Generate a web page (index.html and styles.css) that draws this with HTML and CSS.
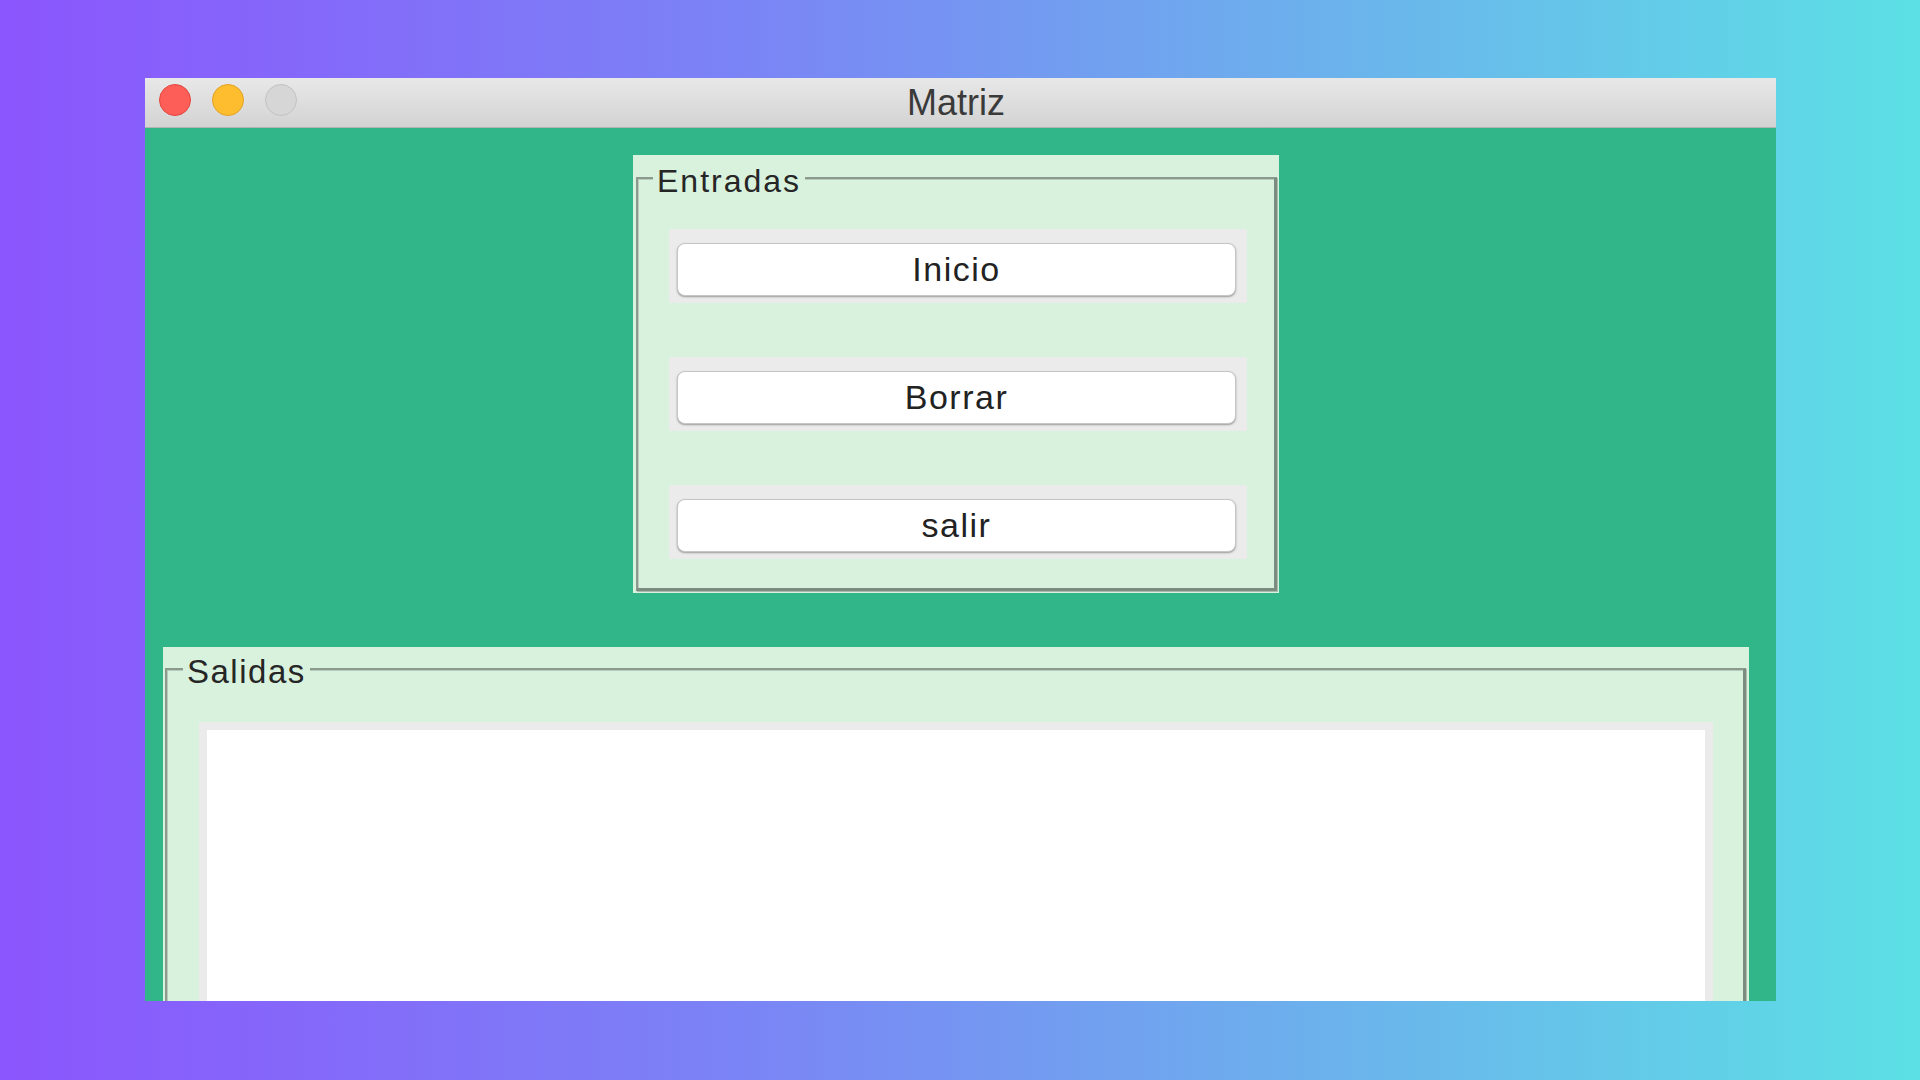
FILE: index.html
```html
<!DOCTYPE html>
<html lang="es">
<head>
<meta charset="utf-8">
<title>Matriz</title>
<link rel="stylesheet" href="styles.css">
</head>
<body>
<div class="window">
  <div class="titlebar">
    <div class="lights">
      <span class="light red"></span>
      <span class="light yellow"></span>
      <span class="light gray"></span>
    </div>
    <div class="title">Matriz</div>
    <div></div>
  </div>
  <div class="content">
    <div class="panel entradas">
      <div class="frame">
        <span class="legend">Entradas</span>
        <div class="btn-wrap"><button class="btn">Inicio</button></div>
        <div class="btn-wrap"><button class="btn">Borrar</button></div>
        <div class="btn-wrap"><button class="btn">salir</button></div>
      </div>
    </div>
    <div class="panel salidas">
      <div class="frame">
        <span class="legend">Salidas</span>
        <div class="textarea"></div>
      </div>
    </div>
  </div>
</div>
</body>
</html>
```

FILE: styles.css
```css
html, body {
  margin: 0;
  padding: 0;
}
body {
  width: 1920px;
  height: 1080px;
  overflow: hidden;
  background: linear-gradient(90deg, #8b55fd 0%, #7a86f5 40%, #6bb3ec 70%, #5ce0e5 100%);
  font-family: "Liberation Sans", Arial, sans-serif;
  padding-top: 78px;
  box-sizing: border-box;
}
.window {
  margin-left: 145px;
  width: 1631px;
  height: 923px;
  display: flex;
  flex-direction: column;
  overflow: hidden;
}
.titlebar {
  height: 49px;
  border-bottom: 1px solid #b3b3b3;
  background: linear-gradient(#e8e8e8, #d3d3d3);
  display: grid;
  grid-template-columns: 1fr auto 1fr;
  flex: none;
}
.lights {
  display: flex;
  gap: 21px;
  padding: 6px 0 0 14px;
}
.light {
  width: 32px;
  height: 32px;
  border-radius: 50%;
  box-sizing: border-box;
}
.red { background: #fd5e57; border: 1px solid #e2463f; }
.yellow { background: #febc2f; border: 1px solid #e0a326; }
.gray { background: #d6d6d6; border: 1px solid #c2c2c2; }
.title {
  font-size: 36px;
  line-height: 49px;
  color: #3a3a3a;
  margin-left: -9px;
}
.content {
  flex: 1;
  background: #31b689;
  padding-top: 27px;
  overflow: hidden;
}
.panel {
  background: #d9f2dd;
  box-sizing: border-box;
}
.entradas {
  margin-left: 488px;
  width: 646px;
  padding: 22px 2px 2px 3px;
}
.frame {
  position: relative;
  border-style: solid;
  border-color: #8a9b8d #7c8c80 #7c8c80 #8a9b8d;
  border-width: 2px 3px 3px 2px;
  box-shadow: 1px 1px 0 #aabdad, inset 1px 1px 0 #b9cbbd;
}
.entradas .frame {
  padding: 50px 27px 29px 31px;
  display: flex;
  flex-direction: column;
  gap: 54px;
}
.legend {
  position: absolute;
  background: #d9f2dd;
  color: #262626;
  padding: 0 4px;
}
.entradas .legend {
  top: -16px;
  left: 15px;
  font-size: 32px;
  line-height: 37px;
  letter-spacing: 2px;
}
.btn-wrap {
  background: #ebebeb;
  padding: 14px 11px 7px 8px;
}
.btn {
  display: block;
  width: 100%;
  height: 53px;
  background: #ffffff;
  border: 1px solid #c6c6c6;
  border-radius: 8px;
  box-shadow: 0 1px 2px rgba(0, 0, 0, 0.35);
  font-family: "Liberation Sans", Arial, sans-serif;
  font-size: 34px;
  color: #222222;
  padding: 0;
  letter-spacing: 1.5px;
}
.salidas {
  margin-top: 54px;
  margin-left: 18px;
  width: 1586px;
  padding: 21px 3px 0 2px;
}
.salidas .frame {
  padding: 52px 30px 0 32px;
  border-bottom: none;
}
.salidas .legend {
  top: -17px;
  left: 16px;
  font-size: 33px;
  line-height: 38px;
  letter-spacing: 1.5px;
}
.textarea {
  height: 400px;
  background: #ffffff;
  border: 8px solid #ebebeb;
  border-bottom: none;
}
```
